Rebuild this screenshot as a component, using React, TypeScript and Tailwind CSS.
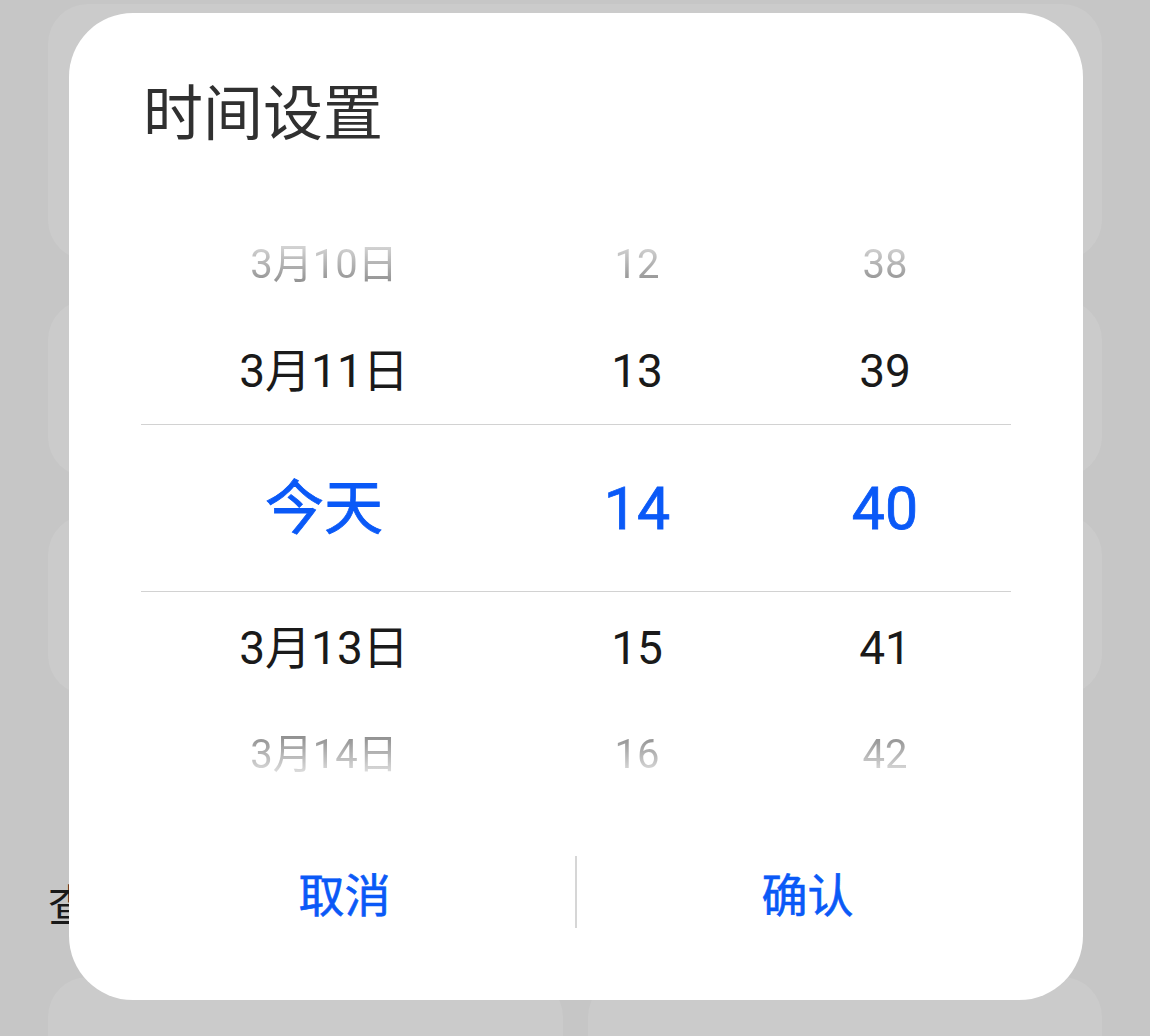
import React from 'react';

// Picker rows, top to bottom: [date, hour, minute]
const ROWS: { cells: string[]; kind: 'fadeTop' | 'normal' | 'selected' | 'fadeBottom'; h: string }[] = [
  { cells: ['3月10日', '12', '38'], kind: 'fadeTop', h: 'h-[106px]' },
  { cells: ['3月11日', '13', '39'], kind: 'normal', h: 'h-[106px]' },
  { cells: ['今天', '14', '40'], kind: 'selected', h: 'h-[168px]' },
  { cells: ['3月13日', '15', '41'], kind: 'normal', h: 'h-[112px]' },
  { cells: ['3月14日', '16', '42'], kind: 'fadeBottom', h: 'h-[102px]' },
];

function Cell({ text, kind }: { text: string; kind: string }) {
  if (kind === 'selected') {
    return <span className="text-[59px] leading-none font-normal text-[#0a59f7] [-webkit-text-stroke:0.8px_#0a59f7]">{text}</span>;
  }
  if (kind === 'normal') {
    return <span className="text-[46px] leading-none text-[#1a1a1a]">{text}</span>;
  }
  // faded rows fade out towards the dialog edge
  const grad =
    kind === 'fadeTop'
      ? 'bg-linear-to-b from-[#d6d6d6] to-[#8e8e8e]'
      : 'bg-linear-to-b from-[#8e8e8e] to-[#e2e2e2]';
  return (
    <span className={`inline-block text-[40px] leading-none bg-clip-text text-transparent ${grad}`}>{text}</span>
  );
}

function Picker() {
  return (
    <div className="mx-[72px] mt-[67px] flex flex-col">
      {ROWS.map((row, i) => (
        <div
          key={i}
          className={`grid grid-cols-[366px_260px_236px] ${row.h} ${
            row.kind === 'selected' ? 'border-y border-[#d2d2d2]' : ''
          }`}
        >
          {row.cells.map((c, j) => (
            <div key={j} className="flex items-center justify-center">
              <Cell text={c} kind={row.kind} />
            </div>
          ))}
        </div>
      ))}
    </div>
  );
}

export default function App() {
  return (
    <div
      className="relative h-[1036px] w-[1150px] overflow-hidden bg-[#c6c6c6]"
      style={{ fontFamily: "Roboto, 'Noto Sans CJK SC', sans-serif" }}
    >
      {/* page behind the scrim */}
      <div className="flex flex-col px-[48px] pt-[4px]">
        <div className="h-[256px] rounded-[40px] bg-[#cbcbcb]" />
        <div className="mt-[40px] h-[177px] rounded-[40px] bg-[#cbcbcb]" />
        <div className="mt-[38px] h-[180px] rounded-[40px] bg-[#cbcbcb]" />
        <p className="mt-[190px] text-[44px] leading-none text-[#191919]">查看更多</p>
        <div className="mt-[48px] grid grid-cols-2 gap-[25px]">
          <div className="h-[150px] rounded-[40px] bg-[#cbcbcb]" />
          <div className="h-[150px] rounded-[40px] bg-[#cbcbcb]" />
        </div>
      </div>

      {/* time setting dialog */}
      <div className="absolute left-[69px] top-[13px] flex h-[987px] w-[1014px] flex-col rounded-[64px] bg-white">
        <h1 className="ml-[74px] mt-[72px] text-[60px] leading-none font-normal text-[#303030]">时间设置</h1>

        <Picker />

        <div className="mx-[45px] mt-[50px] flex h-[72px] items-stretch">
          <button className="flex flex-1 items-center justify-center pt-[8px] text-[46px] leading-none font-normal text-[#0a59f7] [-webkit-text-stroke:0.6px_#0a59f7]">
            取消
          </button>
          <div className="w-[2px] bg-[#d6d6d6]" />
          <button className="flex flex-1 items-center justify-center pt-[8px] text-[46px] leading-none font-normal text-[#0a59f7] [-webkit-text-stroke:0.6px_#0a59f7]">
            确认
          </button>
        </div>
      </div>
    </div>
  );
}
